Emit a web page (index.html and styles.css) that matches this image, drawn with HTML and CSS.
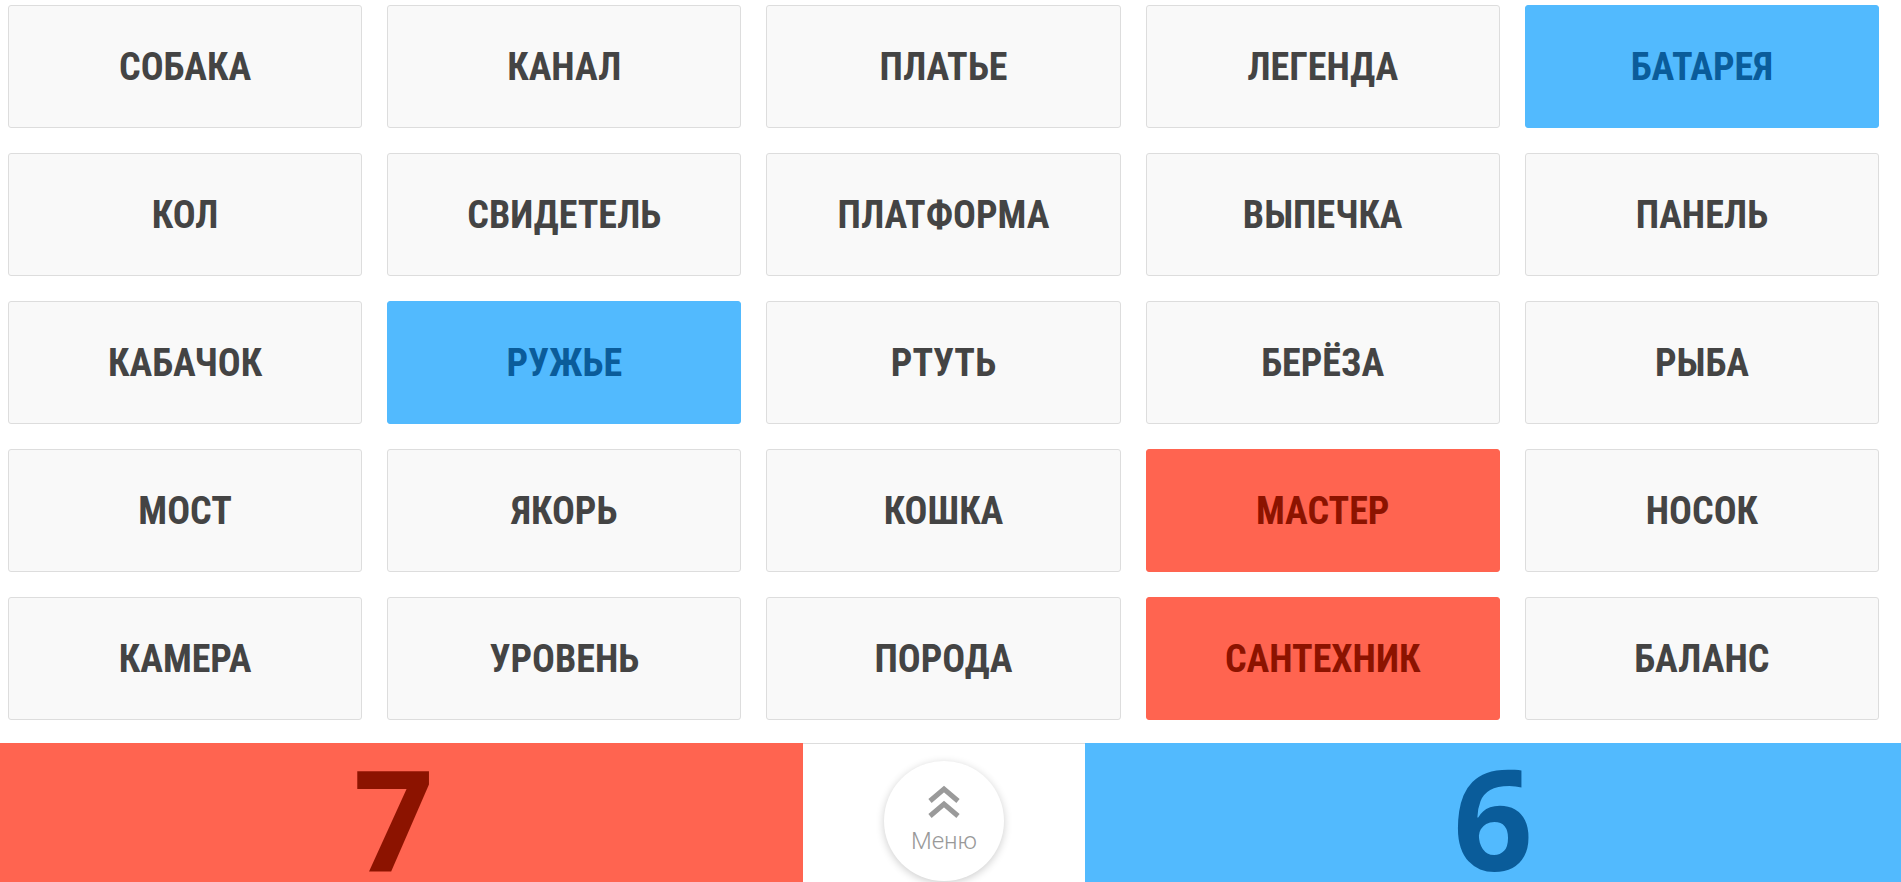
FILE: index.html
```html
<!DOCTYPE html>
<html lang="ru">

<head>
  <meta charset="UTF-8">
  <meta name="viewport" content="width=device-width, initial-scale=1.0">
  <title>Codenames</title>
  <link rel="stylesheet" href="styles.css">
</head>

<body>

  <div class="board">
    <div class="card">СОБАКА</div>
    <div class="card">КАНАЛ</div>
    <div class="card">ПЛАТЬЕ</div>
    <div class="card">ЛЕГЕНДА</div>
    <div class="card blue">БАТАРЕЯ</div>

    <div class="card">КОЛ</div>
    <div class="card">СВИДЕТЕЛЬ</div>
    <div class="card">ПЛАТФОРМА</div>
    <div class="card">ВЫПЕЧКА</div>
    <div class="card">ПАНЕЛЬ</div>

    <div class="card">КАБАЧОК</div>
    <div class="card blue">РУЖЬЕ</div>
    <div class="card">РТУТЬ</div>
    <div class="card">БЕРЁЗА</div>
    <div class="card">РЫБА</div>

    <div class="card">МОСТ</div>
    <div class="card">ЯКОРЬ</div>
    <div class="card">КОШКА</div>
    <div class="card red">МАСТЕР</div>
    <div class="card">НОСОК</div>

    <div class="card">КАМЕРА</div>
    <div class="card">УРОВЕНЬ</div>
    <div class="card">ПОРОДА</div>
    <div class="card red">САНТЕХНИК</div>
    <div class="card">БАЛАНС</div>
  </div>

  <div class="score-bar">
    <div class="score score-red">7</div>
    <div class="menu-area">
      <button class="menu-btn">
        <svg width="34" height="34" viewBox="0 0 34 34" fill="none" stroke="#9a9a9a" stroke-width="5">
          <polyline points="3,16 17,4 31,16" />
          <polyline points="3,31 17,19 31,31" />
        </svg>
        <span>Меню</span>
      </button>
    </div>
    <div class="score score-blue">6</div>
  </div>

</body>

</html>
```

FILE: styles.css
```css
body {
  margin: 0;
  padding: 0;
  height: 100vh;
  overflow: hidden;
  background-color: #ffffff;
  font-family: Roboto, "Liberation Sans", sans-serif;
}

.board {
  display: grid;
  grid-template-columns: repeat(5, 1fr);
  grid-auto-rows: 123px;
  column-gap: 25px;
  row-gap: 25px;
  padding: 5px 22px 0 8px;
}

.card {
  display: flex;
  align-items: center;
  justify-content: center;
  background-color: #f9f9f9;
  border: 1px solid #dddddd;
  border-radius: 3px;
  color: #444444;
  font-family: Roboto, sans-serif;
  font-weight: 700;
  font-size: 38px;
  font-stretch: 75%;
}

.card.blue {
  background-color: #52bafe;
  border-color: #52bafe;
  color: #0a5c9a;
}

.card.red {
  background-color: #ff6450;
  border-color: #ff6450;
  color: #8c1300;
}

.score-bar {
  display: flex;
  margin-top: 23px;
  height: 139px;
}

.score {
  font-family: "Open Sans", sans-serif;
  font-weight: 700;
  font-size: 140px;
  line-height: 110px;
  padding-top: 19px;
  text-align: center;
}

.score-red {
  width: 803px;
  padding-right: 16px;
  box-sizing: border-box;
  background-color: #ff6450;
  color: #8c1300;
}

.score-blue {
  flex: 1;
  background-color: #52bafe;
  color: #0a5c9a;
}

.menu-area {
  width: 282px;
  border-top: 1px solid #dddddd;
  box-sizing: border-box;
  display: flex;
  justify-content: center;
  padding-top: 17px;
}

.menu-btn {
  width: 120px;
  height: 120px;
  border: none;
  border-radius: 50%;
  background-color: #ffffff;
  box-shadow: 0 2px 8px rgba(0, 0, 0, 0.2);
  display: flex;
  flex-direction: column;
  align-items: center;
  padding: 24px 0 0 0;
  cursor: pointer;
}

.menu-btn span {
  font-family: Roboto, sans-serif;
  font-weight: 300;
  font-size: 24px;
  color: #999999;
  margin-top: 8px;
  line-height: 28px;
}
```
